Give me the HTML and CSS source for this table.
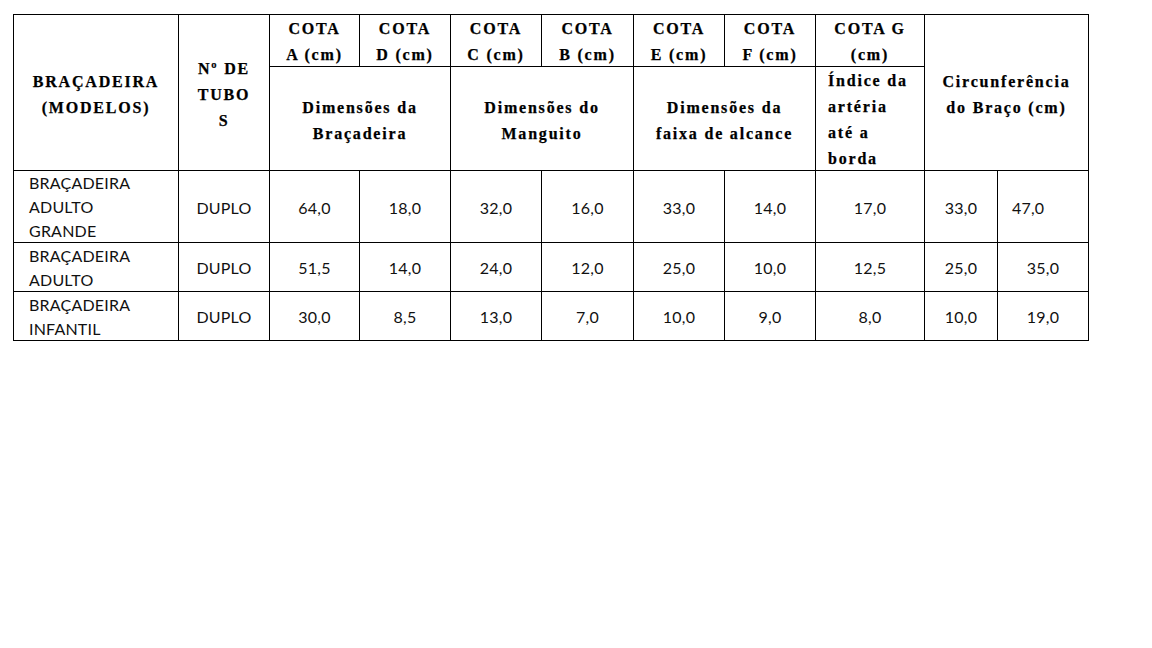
FILE: index.html
```html
<!DOCTYPE html>
<html lang="pt">
<head>
<meta charset="utf-8">
<title>Braçadeiras</title>
<link rel="stylesheet" href="styles.css">
</head>
<body>
<div class="sheet">
  <div class="cell head r12 c1">BRAÇADEIRA<br>(MODELOS)</div>
  <div class="cell head r12 c2">Nº DE<br>TUBO<br>S</div>
  <div class="cell head top">COTA<br>A (cm)</div>
  <div class="cell head top">COTA<br>D (cm)</div>
  <div class="cell head top">COTA<br>C (cm)</div>
  <div class="cell head top">COTA<br>B (cm)</div>
  <div class="cell head top">COTA<br>E (cm)</div>
  <div class="cell head top">COTA<br>F (cm)</div>
  <div class="cell head top">COTA G<br>(cm)</div>
  <div class="cell head r12 circ">Circunferência<br>do Braço (cm)</div>

  <div class="cell head sub c3">Dimensões da<br>Braçadeira</div>
  <div class="cell head sub c5">Dimensões do<br>Manguito</div>
  <div class="cell head sub c7">Dimensões da<br>faixa de alcance</div>
  <div class="cell head sub c9 left">Índice da<br>artéria<br>até a<br>borda</div>

  <div class="cell data name">BRAÇADEIRA<br>ADULTO<br>GRANDE</div>
  <div class="cell data">DUPLO</div>
  <div class="cell data">64,0</div>
  <div class="cell data">18,0</div>
  <div class="cell data">32,0</div>
  <div class="cell data">16,0</div>
  <div class="cell data">33,0</div>
  <div class="cell data">14,0</div>
  <div class="cell data">17,0</div>
  <div class="cell data">33,0</div>
  <div class="cell data start">47,0</div>

  <div class="cell data name">BRAÇADEIRA<br>ADULTO</div>
  <div class="cell data">DUPLO</div>
  <div class="cell data">51,5</div>
  <div class="cell data">14,0</div>
  <div class="cell data">24,0</div>
  <div class="cell data">12,0</div>
  <div class="cell data">25,0</div>
  <div class="cell data">10,0</div>
  <div class="cell data">12,5</div>
  <div class="cell data">25,0</div>
  <div class="cell data">35,0</div>

  <div class="cell data name">BRAÇADEIRA<br>INFANTIL</div>
  <div class="cell data">DUPLO</div>
  <div class="cell data">30,0</div>
  <div class="cell data">8,5</div>
  <div class="cell data">13,0</div>
  <div class="cell data">7,0</div>
  <div class="cell data">10,0</div>
  <div class="cell data">9,0</div>
  <div class="cell data">8,0</div>
  <div class="cell data">10,0</div>
  <div class="cell data">19,0</div>
</div>
</body>
</html>
```
FILE: styles.css
```css
html, body {
  margin: 0;
  padding: 0;
  background: #fff;
}

.sheet {
  display: grid;
  width: max-content;
  margin: 14px 0 0 13px;
  grid-template-columns: 165px 91px 90px 91px 91px 92px 91px 91px 109px 73px 91px;
  grid-template-rows: 52px 104px 72px 49px 49px;
  border-left: 1px solid #000;
  border-top: 1px solid #000;
}

.cell {
  box-sizing: border-box;
  border-right: 1px solid #000;
  border-bottom: 1px solid #000;
  display: flex;
  align-items: center;
  justify-content: center;
  text-align: center;
  color: #000;
}

.head {
  font-family: "Liberation Serif", "Times New Roman", serif;
  font-weight: bold;
  font-size: 16px;
  letter-spacing: 1.8px;
  line-height: 26px;
  padding-top: 4px;
  -webkit-text-stroke: 0.25px #000;
}

.top {
  grid-row: 1;
  padding-top: 2px;
}

.r12 {
  grid-row: 1 / span 2;
}

.c1 {
  grid-column: 1;
}

.c2 {
  grid-column: 2;
}

.c3 {
  grid-column: 3 / span 2;
}

.c5 {
  grid-column: 5 / span 2;
}

.c7 {
  grid-column: 7 / span 2;
}

.c9 {
  grid-column: 9;
}

.circ {
  grid-column: 10 / span 2;
}

.sub {
  grid-row: 2;
}

.left {
  align-items: flex-start;
  justify-content: flex-start;
  text-align: left;
  padding: 1px 0 0 12px;
  line-height: 26px;
}

.data {
  font-family: Lato, "Liberation Sans", sans-serif;
  font-size: 16px;
  line-height: 24px;
  letter-spacing: 0.2px;
  color: #111;
  padding-top: 2px;
}

.name {
  justify-content: flex-start;
  text-align: left;
  padding: 1px 0 0 15px;
}

.start {
  justify-content: flex-start;
  padding-left: 14px;
}
```
